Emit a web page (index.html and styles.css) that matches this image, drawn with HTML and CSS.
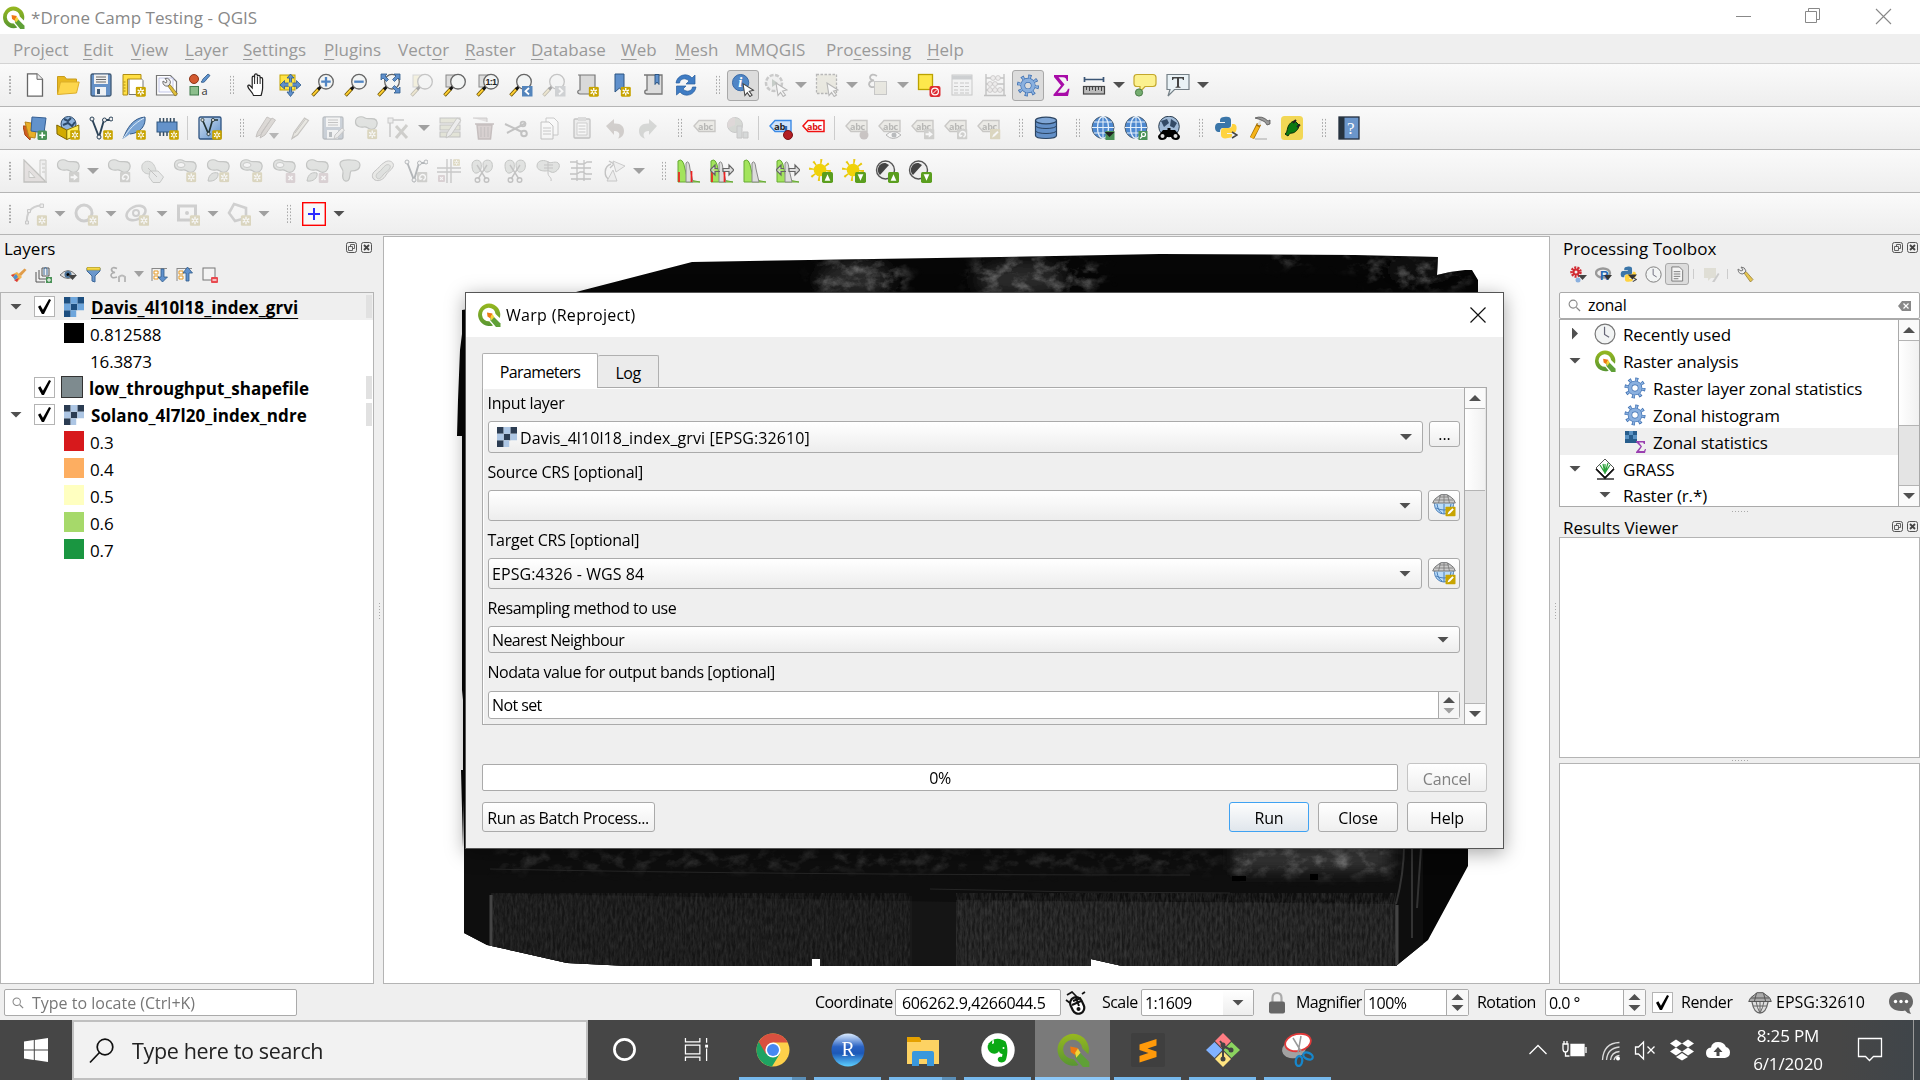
FILE: index.html
```
<!DOCTYPE html>
<html lang="en">
<head>
<meta charset="utf-8">
<title>*Drone Camp Testing - QGIS</title>
<link rel="stylesheet" href="styles.css">
</head>
<body>
<svg class="defs" aria-hidden="true">
<defs>
<linearGradient id="gq" x2="0" y2="1"><stop offset="0" stop-color="#97b81f"/><stop offset="1" stop-color="#589632"/></linearGradient>
<linearGradient id="gblue" x2="1" y2="1"><stop offset="0" stop-color="#d5e4f4"/><stop offset="1" stop-color="#5d8fc9"/></linearGradient>
<linearGradient id="gr" x2="0" y2="1"><stop offset="0" stop-color="#dcecff"/><stop offset=".4" stop-color="#2a63c4"/><stop offset=".6" stop-color="#1c58b8"/><stop offset="1" stop-color="#5ed0ff"/></linearGradient>
<symbol id="bNew" viewBox="0 0 10 10"><rect x=".2" y=".2" width="9.6" height="9.6" rx="1.4" fill="#c8a400"/><path d="M5 1.5v7M2 3.2l6 3.6M8 3.2L2 6.800" stroke="#fff" stroke-width="1.3"/><circle cx="5" cy="5" r="1" fill="#c8a400"/></symbol>
<symbol id="bX" viewBox="0 0 10 10"><rect width="10" height="10" rx="1.4" fill="#c98a9c"/><path d="M3 3l4 4M7 3L3 7" stroke="#fff" stroke-width="1.600"/></symbol>
<symbol id="bArrow" viewBox="0 0 10 10"><rect width="10" height="10" rx="1" fill="#8f8f80"/><path d="M1.500 4h3V2L8.500 5 4.500 8V6h-3z" fill="#fff"/></symbol>
<symbol id="bRot" viewBox="0 0 10 10"><rect width="10" height="10" rx="1" fill="#8f8f80"/><path d="M3 6.500A2.700 2.700 0 1 1 6 7.700M2 5l1 2 2-1" fill="none" stroke="#fff" stroke-width="1.400"/></symbol>
<symbol id="bPen" viewBox="0 0 10 10"><rect width="10" height="10" rx="1" fill="#c8a400"/><path d="M2 8l1-2.500L7 1.800 8.300 3 4.500 7z" fill="#fff"/></symbol>
<symbol id="bUp" viewBox="0 0 10 10"><rect width="10" height="10" rx="1.500" fill="#5a9e1e"/><path d="M5 2l2.600 6H2.400z" fill="#fff"/></symbol>
<symbol id="bDown" viewBox="0 0 10 10"><rect width="10" height="10" rx="1.500" fill="#5a9e1e"/><path d="M5 8l2.600-6H2.400z" fill="#fff"/></symbol>
<symbol id="qgis" viewBox="0 0 24 24"><path d="M12 0.500a11.300 11.300 0 1 0 4 22l-3.700-4.200A6.800 6.800 0 1 1 18.600 11l4.200 4A11.300 11.300 0 0 0 12 .5z" fill="url(#gq)"/><path d="M13.500 14h3.500l6.500 6.500V24h-4.500L13.500 17.500z" fill="#5fa037"/><path d="M10 9.500l5.500 1-2 5-3-2z" fill="#ee7913"/><path d="M13.500 14l2-3 1.800 3-3 3.500z" fill="#f3d53a"/></symbol>
<symbol id="new" viewBox="0 0 24 24"><path d="M4.500.8h9.500l5.500 5.500v16.900h-15z" fill="#fff" stroke="#666" stroke-width="1.300"/><path d="M14 .8v5.500h5.500" fill="#eee" stroke="#666"/></symbol>
<symbol id="open" viewBox="0 0 24 24"><path d="M1.500 21V3.500h7l2 2.500h10v4" fill="#e8b820" stroke="#c89c1c"/><path d="M1.500 21.500l3-12.500h18.700L20.500 20z" fill="#fdd64c" stroke="#dcae2a"/></symbol>
<symbol id="save" viewBox="0 0 24 24"><rect x="2" y="1" width="20" height="22" rx="1.500" fill="#6591c7" stroke="#415a75" stroke-width="1.300"/><rect x="5" y="1.500" width="14" height="9.500" fill="#f0f0f0"/><path d="M7 4h10M7 6.500h10M7 9h10" stroke="#666"/><rect x="6" y="14" width="11" height="8.500" fill="#eef1f4"/><rect x="8" y="16" width="3" height="5" fill="#415a75"/></symbol>
<symbol id="layout" viewBox="0 0 24 24"><path d="M7 2.500h9l5 5v14H7z" fill="#fff" stroke="#777"/><path d="M1 1.500h18V6H5.500v16H1z" fill="#ffdf45" stroke="#b08e14"/><path d="M1.500 9h2M1.500 12h2M1.500 15h2M1.500 18h2" stroke="#b08e14"/><use href="#bNew" x="13.500" y="13.500" width="10.500" height="10.500"/></symbol>
<symbol id="wrenchpage" viewBox="0 0 24 24"><path d="M1.500 2.500h14l6 6V22h-20z" fill="#fff" stroke="#777" stroke-width="1.200"/><rect x="4" y="5" width="14" height="14" fill="#fafbff" stroke="#aab0dd" stroke-width=".7"/><path d="M12.500 12.500l2.500-1 7.500 9.500-2.500 2z" fill="#e0bf3a" stroke="#80681b" stroke-width=".7"/><path d="M8 8a4 4 0 0 0 5 5l2-2a4 4 0 0 0-5-5.500l2 2.500-1 2z" fill="#ececec" stroke="#666" stroke-width=".9"/></symbol>
<symbol id="style" viewBox="0 0 24 24"><circle cx="6" cy="6" r="4.500" fill="#d45a30" stroke="#8c3518"/><rect x="2" y="13.500" width="8.500" height="8.500" fill="#8cbe8c" stroke="#3f7a4b"/><path d="M13 9c2-1 1-3 3-4l4-4 2 1.500L18 7c-1 2-3 3-5 2z" fill="#5e93cf" stroke="#2f5680" stroke-width=".8"/><text x="13.500" y="21.500" font-family="Open Sans, sans-serif" font-size="11" fill="#333">a</text></symbol>
<symbol id="hand" viewBox="0 0 24 24"><path d="M8.500 22.500c-.5-3-5-6-5.700-9-.3-1.500 1.700-2 2.700-.3L7.200 15V4.500c0-1.800 2.300-1.800 2.400 0V2.200c0-1.900 2.700-1.900 2.800 0v1.300c.1-1.700 2.600-1.600 2.700.2v2c.2-1.500 2.400-1.300 2.500.4v9c0 3-1 5-1.500 7.400z" fill="#fff" stroke="#222" stroke-width="1.200"/><path d="M9.600 4v7M12.400 4v7M15.100 6v5" stroke="#222"/></symbol>
<symbol id="pan" viewBox="0 0 24 24"><rect x="2" y="2" width="15" height="15" fill="#ffe344" stroke="#c2a100"/><path d="M12.500 1l3.500 4h-2.500v5h5V7.500L23 12l-4.500 4v-2.700h-5V19H16l-3.500 4.500L9 19h2.500v-5.700h-5V16L2 12l4.500-4.500V10h5V5H9z" fill="#5f90cc" stroke="#305a88" stroke-width=".8"/><rect x="10.500" y="9.500" width="4" height="4" fill="#ffe344"/></symbol>
<symbol id="mag" viewBox="0 0 24 24"><path d="M8 15.500L1.500 22.500" stroke="#6a5200" stroke-width="3.400"/><path d="M7.500 16L1.800 22.200" stroke="#ffcf32" stroke-width="1.900"/><path d="M10 13.500l-3 3" stroke="#111" stroke-width="3"/><circle cx="15" cy="8.700" r="7.300" fill="#f2f4f4" stroke="#666" stroke-width="1.300"/></symbol>
<symbol id="zin" viewBox="0 0 24 24"><use href="#mag"/><path d="M15 4v9.500M10.200 8.700h9.500" stroke="#5085c4" stroke-width="2.300"/></symbol>
<symbol id="zout" viewBox="0 0 24 24"><use href="#mag"/><path d="M10.200 8.700h9.500" stroke="#5085c4" stroke-width="2.300"/></symbol>
<symbol id="zfull" viewBox="0 0 24 24"><use href="#mag"/><path d="M4 1h6L8 3l3.500 3.500-2 2L6 5 4 7zM23 1h-6l2 2-3.500 3.500 2 2L21 5l2 2zM23 20h-6l2-2-3.500-3.500 2-2L21 16l2-2z" fill="#5f90cc" stroke="#2f5a8a" stroke-width=".8"/></symbol>
<symbol id="zsel" viewBox="0 0 24 24"><rect x="3" y="2" width="12" height="12" fill="#ffe969" stroke="#999"/><use href="#mag"/></symbol>
<symbol id="zlay" viewBox="0 0 24 24"><rect x="3" y="2" width="12" height="12" fill="#ddd" stroke="#888"/><use href="#mag"/></symbol>
<symbol id="znat" viewBox="0 0 24 24"><rect x="3" y="2" width="12" height="12" fill="#ddd" stroke="#888"/><use href="#mag"/><text x="9.400" y="12" font-family="Liberation Sans, sans-serif" font-weight="bold" font-size="9" textLength="11.500" fill="#222">1:1</text></symbol>
<symbol id="zlast" viewBox="0 0 24 24"><use href="#mag"/><rect x="13" y="13" width="10.500" height="10.500" fill="#5485bc"/><path d="M20 15l-3.500 3.200L20 21.500" fill="none" stroke="#fff" stroke-width="1.800"/></symbol>
<symbol id="znext" viewBox="0 0 24 24"><use href="#mag"/><rect x="13" y="13" width="10.500" height="10.500" fill="#8895a5"/><path d="M17 15l3.500 3.200L17 21.500" fill="none" stroke="#fff" stroke-width="1.800"/></symbol>
<symbol id="mapview" viewBox="0 0 24 24"><path d="M3 2h17v19H5c-3 0-3-4 0-4V2" fill="#d9d9d9" stroke="#777" stroke-width="1.200"/><use href="#bNew" x="13.500" y="13.500" width="10.500" height="10.500"/></symbol>
<symbol id="bm" viewBox="0 0 24 24"><path d="M7 1h9v19l-4.500-5L7 19z" fill="#5f90cc" stroke="#2d5582"/><use href="#bNew" x="12.500" y="13.500" width="10.500" height="10.500"/></symbol>
<symbol id="bms" viewBox="0 0 24 24"><path d="M3 2h18v19H6c-3 0-3-4 0-4V2" fill="#dcdcdc" stroke="#777" stroke-width="1.300"/><path d="M14 1.500h4v10l-2-2.500-2 2.500z" fill="#5f90cc" stroke="#2d5582"/></symbol>
<symbol id="refresh" viewBox="0 0 24 24"><path d="M2 10c1-8 11-11 16-5l3-3v9h-9l3-3c-4-4-9-2-9.500 2zM22 14c-1 8-11 11-16 5l-3.500 3v-9H12l-3 3c4 4 9 2 9.500-2z" fill="#3f7cc4" stroke="#2a5e9e" stroke-width=".7"/></symbol>
<symbol id="cursor" viewBox="0 0 24 24"><path d="M12 10l11 7-4.500 1 3 4-2.300 1.500-2.700-4-2.500 3z" fill="#fff" stroke="#444" stroke-width="1.100"/></symbol>
<symbol id="ident" viewBox="0 0 24 24"><circle cx="9.500" cy="9" r="8.500" fill="#4f86c6" stroke="#3567a5"/><text x="7" y="14" font-family="Liberation Serif, serif" font-style="italic" font-weight="bold" font-size="15" fill="#fff">i</text><use href="#cursor"/></symbol>
<symbol id="gear" viewBox="0 0 24 24"><circle cx="12" cy="12" r="9.200" fill="none" stroke="#3c6eb0" stroke-width="4.600" stroke-dasharray="3.200 4.020"/><circle cx="12" cy="12" r="5.500" fill="none" stroke="#3c6eb0" stroke-width="5"/><circle cx="12" cy="12" r="9" fill="none" stroke="#8ab0df" stroke-width="3.400" stroke-dasharray="1.800 5.270" stroke-dashoffset="-.6"/><circle cx="12" cy="12" r="5.500" fill="none" stroke="#8ab0df" stroke-width="3.600"/></symbol>
<symbol id="action" viewBox="0 0 24 24"><circle cx="10" cy="10" r="8" fill="#e6e6e6" stroke="#777" stroke-width="2.500" stroke-dasharray="4 1.500"/><path d="M8 6l6 4-6 4z" fill="#5a8a66"/><use href="#cursor"/></symbol>
<symbol id="select" viewBox="0 0 24 24"><rect x="1.500" y="1.500" width="20" height="19" fill="#d9d49a" stroke="#444" stroke-dasharray="2.500 1.500" stroke-width="1.300"/><use href="#cursor"/></symbol>
<symbol id="expr" viewBox="0 0 24 24"><path d="M11 3q-6-3-7 1 0 3 4 3.500-5 .5-5 4 1 4.500 8 1.500" fill="none" stroke="#555" stroke-width="1.800"/><rect x="8.500" y="8.500" width="12" height="13" fill="#d6d1a0" stroke="#777"/></symbol>
<symbol id="desel" viewBox="0 0 24 24"><rect x="1.500" y="1.500" width="14" height="15" fill="#fde74c" stroke="#bba200" stroke-width="1.300"/><rect x="12.500" y="13" width="11" height="11" rx="2" fill="#dd2c33"/><circle cx="18" cy="18.500" r="3.400" fill="none" stroke="#fff" stroke-width="1.200"/><path d="M16 20.500l4-4" stroke="#fff"/></symbol>
<symbol id="table" viewBox="0 0 24 24"><rect x="2" y="2" width="20" height="20" fill="#eef1f3" stroke="#777"/><path d="M2 4.500h20" stroke="#789" stroke-width="4"/><path d="M4 10h4M10 10h10M4 13.500h4M10 13.500h10M4 17h4M10 17h10M4 20h4M10 20h10" stroke="#777" stroke-dasharray="4 1"/></symbol>
<symbol id="abacus" viewBox="0 0 24 24"><path d="M3 1v22M21 1v22M1 22.500h22M3 5h18M3 11h18M3 17h18" stroke="#666" stroke-width="1.400"/><g fill="#e5d9d9" stroke="#766" stroke-width=".8"><circle cx="10" cy="5" r="2.400"/><circle cx="15" cy="5" r="2.400"/><circle cx="7" cy="11" r="2.400"/><circle cx="12" cy="11" r="2.400"/><circle cx="7" cy="17" r="2.400"/><circle cx="12" cy="17" r="2.400"/><circle cx="17" cy="17" r="2.400"/></g></symbol>
<symbol id="sigma" viewBox="0 0 24 24"><path d="M5 2h14v6h-1.200c-.4-2.500-1.300-3.800-4-3.800H9.500l6 7.300-6.700 8.200h5.700c2.800 0 3.700-1.700 4.500-4H20.500L19 23H4.500v-1.500l7.500-9L5 4z" fill="#a80ca8"/></symbol>
<symbol id="ruler" viewBox="0 0 24 24"><path d="M2 6.500h20M2.500 4v5M21.500 4v5" stroke="#3a5575" stroke-width="1.700"/><rect x="1.500" y="13.500" width="21" height="7.500" fill="#bbb" stroke="#444" stroke-width="1.200"/><path d="M4.500 14v3M7.500 14v4M10.500 14v3M13.500 14v4M16.500 14v3M19.500 14v4" stroke="#444"/></symbol>
<symbol id="tip" viewBox="0 0 24 24"><path d="M4 1.500h16q3 0 3 3v6q0 3-3 3h-8l-5 5.500v-5.500H4q-3 0-3-3v-6q0-3 3-3z" fill="#fcf18e" stroke="#c3a72c" stroke-width="1.200"/><circle cx="6" cy="19.500" r="3.600" fill="#75ad70" stroke="#487b46"/></symbol>
<symbol id="tnote" viewBox="0 0 24 24"><path d="M1 1.500h22v15H8.500L2 23l2-6.500H1z" fill="#e9f2f6" stroke="#758087" stroke-width="1.200"/><path d="M6 4h12v3h-1l-.8-1.500H13v8l1.500.5v.8h-5V14l1.500-.5v-8H7.800L7 7H6z" fill="#444"/></symbol>
<symbol id="dsm" viewBox="0 0 24 24"><path d="M0 10l9 0-2 14-5-5z" fill="#d15e1f" stroke="#a54512"/><path d="M2 6l12 2-2 14-6-1z" fill="#e9af28" stroke="#b7861a"/><path d="M9 1l14 1-2 15-13-2z" fill="#6292cb" stroke="#345e93"/><rect x="14.500" y="14.500" width="9.500" height="9.500" rx="1.500" fill="#4b9258"/><path d="M19.200 16.300v6M16.300 19.200h6" stroke="#fff" stroke-width="1.600"/></symbol>
<symbol id="gpkg" viewBox="0 0 24 24"><circle cx="12.500" cy="8" r="7.500" fill="#8eb3dc" stroke="#2c4a6b"/><path d="M8 3l4 2 3-3M7 9l5-2 4 3 3-4" stroke="#2c4a6b" stroke-width="2" fill="none"/><path d="M.8 9l10 5v9.500L1 18z" fill="#d2ab00" stroke="#7a6200"/><path d="M10.800 14l12-5v9.500l-12 5z" fill="#ffee55" stroke="#8a7300"/><use href="#bNew" x="14" y="14" width="10" height="10"/></symbol>
<symbol id="vec" viewBox="0 0 24 24"><path d="M3 3l7 18 5-17h7" fill="none" stroke="#2c4358" stroke-width="1.900"/><g fill="#eee" stroke="#2c4358"><circle cx="3" cy="3" r="2"/><circle cx="10" cy="21" r="2"/><circle cx="15.500" cy="4" r="2"/><circle cx="22" cy="3" r="2"/></g></symbol>
<symbol id="vecnew" viewBox="0 0 24 24"><use href="#vec"/><use href="#bNew" x="14" y="14" width="10" height="10"/></symbol>
<symbol id="feather" viewBox="0 0 24 24"><path d="M1 23C5 12 11 2 23 1c1 8-4 16-15 17" fill="#79a4d5" stroke="#345a88"/><path d="M1 23C7 13 13 7 22 2" stroke="#dcebf8" fill="none"/><use href="#bNew" x="14" y="14" width="10" height="10"/></symbol>
<symbol id="chip" viewBox="0 0 24 24"><path d="M5 2v18M8.500 2v18M12 2v18M15.500 2v18M19 2v18" stroke="#33495e" stroke-width="1.500"/><rect x="2" y="6" width="20" height="10" fill="#6492ca" stroke="#2f5680"/><use href="#bNew" x="14" y="14" width="10" height="10"/></symbol>
<symbol id="virt" viewBox="0 0 24 24"><rect x="1" y="1" width="22" height="22" rx="1.500" fill="url(#gblue)" stroke="#2e5380" stroke-width="1.300"/><path d="M4.500 4l6 14 4-14H20" fill="none" stroke="#233" stroke-width="1.700"/><g fill="#ddd" stroke="#233" stroke-width=".8"><circle cx="4.500" cy="4" r="1.600"/><circle cx="10.500" cy="18" r="1.600"/><circle cx="15" cy="4" r="1.600"/></g><use href="#bNew" x="14" y="14" width="10" height="10"/></symbol>
<symbol id="pen" viewBox="0 0 24 24"><path d="M4 22.500l2-6L16.500 2l4 2.500L9.500 19z" fill="#d8d0a8" stroke="#776a55" stroke-width="1.200"/><path d="M4 22.500l3-2M7 17L17.500 3" stroke="#776a55"/></symbol>
<symbol id="pens" viewBox="0 0 24 24"><path d="M1 21l1.500-5L12 1l4 2L5.500 19zM5 22l2-6L17 2l3.500 2L10 19z" fill="#b9a08c" stroke="#75604f"/><path d="M14 17h10l-5 6z" fill="#444"/></symbol>
<symbol id="savee" viewBox="0 0 24 24"><use href="#save"/><path d="M13 23l1-4 7-7 2.500 2-7 7.500z" fill="#ddd" stroke="#777"/></symbol>
<symbol id="blob" viewBox="0 0 24 24"><path d="M1.500 6C1.500 0 8 0 11 2s11-2 12 4-4 8-7 7-3-2.500-6-2-8.500 0-8.500-5z" fill="#b4c0b3" stroke="#5f6a60" stroke-width="1.200"/></symbol>
<symbol id="blobn" viewBox="0 0 24 24"><use href="#blob"/><use href="#bNew" x="13" y="13" width="10.500" height="10.500"/></symbol>
<symbol id="bloba" viewBox="0 0 24 24"><use href="#blob"/><use href="#bArrow" x="13" y="13" width="10.500" height="10.500"/></symbol>
<symbol id="blobr" viewBox="0 0 24 24"><use href="#blob"/><use href="#bRot" x="13" y="13" width="10.500" height="10.500"/></symbol>
<symbol id="ring" viewBox="0 0 24 24"><use href="#blob"/><ellipse cx="8" cy="6" rx="4" ry="2.500" fill="#f3f3f3" stroke="#6f7a70"/><use href="#bNew" x="13" y="13" width="10.500" height="10.500"/></symbol>
<symbol id="ringx" viewBox="0 0 24 24"><use href="#blob"/><ellipse cx="8" cy="6" rx="4" ry="2.500" fill="#f3f3f3" stroke="#6f7a70"/><use href="#bX" x="13.500" y="14" width="10" height="10"/></symbol>
<symbol id="part" viewBox="0 0 24 24"><use href="#blob"/><path d="M2 22c1-8 6-9 10-8 1 5-4 9-10 8z" fill="#b4c0b3" stroke="#5f6a60"/><use href="#bNew" x="13" y="13" width="10.500" height="10.500"/></symbol>
<symbol id="partx" viewBox="0 0 24 24"><use href="#blob"/><path d="M2 22c1-8 6-9 10-8 1 5-4 9-10 8z" fill="#b4c0b3" stroke="#5f6a60"/><use href="#bX" x="13.500" y="14" width="10" height="10"/></symbol>
<symbol id="reshape" viewBox="0 0 24 24"><path d="M2 5c0-5 8-4 11-4s9 0 9 5-5 6-9 6c-2 3 0 9-4 10s-5-4-4-8-3-5-3-9z" fill="#b4c0b3" stroke="#5f6a60" stroke-width="1.200"/></symbol>
<symbol id="offset" viewBox="0 0 24 24"><path d="M14 3c5-3 10 1 8 5s-5 4-7 8-7 7-11 5-3-7 0-9 5-6 10-9z" fill="#d6d6c6" stroke="#666"/><path d="M15 6c3-1 5 0 4 3s-5 4-7 7-4 5-6 3 0-5 2-6 4-5 7-7z" fill="#b4c0b3" stroke="#6f7a70"/></symbol>
<symbol id="simp" viewBox="0 0 24 24"><path d="M2 6c3-6 10-4 12 0s3 6 0 8S0 16 2 6z" fill="#b4c0b3" stroke="#6f7a70"/><path d="M10 12h8l5.500 6-3.500 5.500h-7L9 18z" fill="#d0d8d6" stroke="#6f7a70"/><path d="M8 9l9 9" stroke="#666"/></symbol>
<symbol id="vrot" viewBox="0 0 24 24"><use href="#vec"/><use href="#bRot" x="13" y="13" width="10.500" height="10.500"/></symbol>
<symbol id="merge" viewBox="0 0 24 24"><path d="M10 0v24M14 0v24M0 9h24M0 13h24" stroke="#777" stroke-width="1.400"/><use href="#bNew" x="16" y="0" width="7" height="7"/><use href="#bX" x="1" y="16" width="7" height="7"/></symbol>
<symbol id="split" viewBox="0 0 24 24"><path d="M2 6c0-6 8-6 9-2s0 9-4 10-5-4-5-8zM13 5c0-5 8-5 9-1s0 8-4 9-5-4-5-8z" fill="#b4c0b3" stroke="#5f6a60"/><path d="M7 6l9 14M17 6L8 20" stroke="#666" stroke-width="1.400"/><circle cx="7.500" cy="21" r="2.300" fill="none" stroke="#666" stroke-width="1.400"/><circle cx="16.500" cy="21" r="2.300" fill="none" stroke="#666" stroke-width="1.400"/></symbol>
<symbol id="mergef" viewBox="0 0 24 24"><path d="M1 7c0-7 9-6 11-4s9-2 11 2-4 10-8 8-3-1-6-1-8-1-8-5z" fill="#b4c0b3" stroke="#5f6a60"/><path d="M8 6h9M8 9h9M12 2v12c0 4 4 4 3 8" stroke="#666" fill="none"/></symbol>
<symbol id="ladder" viewBox="0 0 24 24"><path d="M1 3h6l3 2h5l3-2h5M2 9h20M1 15h7l3-2h3l3 2h6M2 20h20M8 1v21M15 1v21" stroke="#666" fill="none" stroke-width="1.300"/></symbol>
<symbol id="rotsym" viewBox="0 0 24 24"><path d="M8 21C1 18 2 7 9 5M7 2l5 3-4 4" stroke="#666" fill="none" stroke-width="1.400"/><path d="M11 2l12 5-9 6zM5 22l6-11 4 11z" fill="#e3e3e3" stroke="#777"/></symbol>
<symbol id="tri" viewBox="0 0 24 24"><path d="M1 1v22h22z" fill="#d3b9b3" stroke="#665" stroke-width="1.300"/><path d="M6 12v6.500h6z" fill="#f3f3f3" stroke="#776"/><path d="M17 1h6v22" fill="#ddd" stroke="#776"/><path d="M17 1v16M19 5h3M19 9h3M19 13h3" stroke="#776"/></symbol>
<symbol id="vtool" viewBox="0 0 24 24"><path d="M3 21V4h14" stroke="#777" fill="none" stroke-width="1.500"/><rect x="1" y="2" width="5" height="5" fill="#ddd" stroke="#777"/><path d="M9 22L20 9M9 10l11 12" stroke="#8d8976" stroke-width="3"/></symbol>
<symbol id="multi" viewBox="0 0 24 24"><rect x="2" y="2" width="20" height="5" fill="#c5cc78" stroke="#666"/><rect x="2" y="9" width="20" height="5" fill="#c5cc78" stroke="#666"/><rect x="2" y="16" width="20" height="5" fill="#c5cc78" stroke="#666"/><path d="M8 22l1-5L19 2l4 2L13 19z" fill="#ddd" stroke="#776"/></symbol>
<symbol id="trash" viewBox="0 0 24 24"><path d="M2 2h14v4" fill="#c7b5b5" stroke="#877"/><path d="M4 8h19M6 9l1.500 14h12L21 9z" fill="#c08a8a" stroke="#855" stroke-width="1.500"/><path d="M10 11v10M13.500 11v10M17 11v10" stroke="#866" stroke-width="1.300"/></symbol>
<symbol id="cut" viewBox="0 0 24 24"><path d="M1 8l17 8M3 17L22 7" stroke="#666" stroke-width="2"/><circle cx="20" cy="17.500" r="2.800" fill="none" stroke="#666" stroke-width="2"/><circle cx="19" cy="8" r="2.400" fill="none" stroke="#666" stroke-width="1.800"/></symbol>
<symbol id="copy" viewBox="0 0 24 24"><path d="M9 2h8l4 4v13H9z" fill="#fff" stroke="#777"/><path d="M4 6h8l4 4v13H4z" fill="#fff" stroke="#666"/><path d="M6 12h8M6 15h8M6 18h8" stroke="#777"/></symbol>
<symbol id="paste" viewBox="0 0 24 24"><rect x="4" y="3" width="16" height="19" rx="1" fill="#ddd" stroke="#666" stroke-width="1.300"/><rect x="8" y="1" width="8" height="4" fill="#aaa"/><path d="M7 7h10v12H7z" fill="#fff" stroke="#888"/><path d="M8.500 10h7M8.500 13h7M8.500 16h7" stroke="#777"/></symbol>
<symbol id="undo" viewBox="0 0 24 24"><path d="M3 10l8-7v4.500c7-.5 10 3 10 7.500s-3 7-6 7.500c3-4 1-8-4-7.500v4z" fill="#9d8475"/></symbol>
<symbol id="redo" viewBox="0 0 24 24"><path d="M21 10l-8-7v4.500C6 7 3 10.500 3 15s3 7 6 7.500c-3-4-1-8 4-7.500v4z" fill="#98a294"/></symbol>
<symbol id="lab" viewBox="0 0 24 24"><path d="M1 10l5-5.500h16v11H6z" fill="#dcd8bc" stroke="#7c7464" stroke-width="1.400"/><text x="5" y="13.500" font-family="Open Sans, sans-serif" font-weight="bold" font-size="9" textLength="15" fill="#443">abc</text></symbol>
<symbol id="labred" viewBox="0 0 24 24"><path d="M1 10l5-5.500h16v11H6z" fill="#fff" stroke="#f01010" stroke-width="1.500"/><text x="5" y="13.500" font-family="Open Sans, sans-serif" font-weight="bold" font-size="9" textLength="15" fill="#e01010">abc</text></symbol>
<symbol id="labpin" viewBox="0 0 24 24"><path d="M1 10l5-5.500h16v11H6z" fill="#cfe3fa" stroke="#3b8ae6" stroke-width="1.400"/><text x="5" y="13.500" font-family="Open Sans, sans-serif" font-weight="bold" font-size="9.500" fill="#222">ab</text><path d="M17 10v6" stroke="#2b6cb8" stroke-width="2.400"/><circle cx="19" cy="19" r="4.500" fill="#b21f24" stroke="#7b1114"/></symbol>
<symbol id="labp" viewBox="0 0 24 24"><use href="#lab"/><circle cx="19" cy="19" r="4.500" fill="#8a6a65"/></symbol>
<symbol id="labe" viewBox="0 0 24 24"><use href="#lab"/><path d="M8 19q7-7 15 0-8 7-15 0z" fill="#fff" stroke="#444"/><circle cx="16" cy="19" r="2.500" fill="#456"/></symbol>
<symbol id="laba" viewBox="0 0 24 24"><use href="#lab"/><use href="#bArrow" x="13" y="13" width="10.500" height="10.500"/></symbol>
<symbol id="labr" viewBox="0 0 24 24"><use href="#lab"/><use href="#bRot" x="13" y="13" width="10.500" height="10.500"/></symbol>
<symbol id="labc" viewBox="0 0 24 24"><use href="#lab"/><use href="#bPen" x="13" y="13" width="10.500" height="10.500"/></symbol>
<symbol id="diag" viewBox="0 0 24 24"><circle cx="9" cy="9" r="7.500" fill="#94a88a" stroke="#777"/><path d="M9 9V1.500A7.500 7.500 0 0 0 2 12z" fill="#c79c9c"/><path d="M11 10h5v12h-5zM17 16h5v6h-5z" fill="#9aa" stroke="#777"/></symbol>
<symbol id="db" viewBox="0 0 24 24"><path d="M1.500 4.500v15c0 4 21 4 21 0v-15" fill="#6390c8" stroke="#2b4462" stroke-width="1.200"/><path d="M1.500 9.500c0 4 21 4 21 0M1.500 14.500c0 4 21 4 21 0" fill="none" stroke="#2b4462"/><ellipse cx="12" cy="4.500" rx="10.500" ry="3.300" fill="#7fa6d6" stroke="#2b4462" stroke-width="1.200"/></symbol>
<symbol id="globe" viewBox="0 0 24 24"><circle cx="12" cy="11.500" r="11" fill="#4e89d0" stroke="#4d5f70"/><path d="M12 .5v22M3 6h18M3 17h18M1 11.500h22" stroke="#e6f0fa" stroke-width="1"/><ellipse cx="12" cy="11.500" rx="5.500" ry="11" fill="none" stroke="#e6f0fa" stroke-width="1.300"/></symbol>
<symbol id="g1" viewBox="0 0 24 24"><use href="#globe"/><rect x="14.500" y="15" width="9" height="9" fill="#4b9258"/><path d="M13.500 16h10l-5 5z" fill="#222"/></symbol>
<symbol id="g2" viewBox="0 0 24 24"><use href="#globe"/><rect x="14.500" y="15" width="9" height="9" fill="#4b9258"/><circle cx="19.500" cy="18.500" r="2" fill="none" stroke="#fff" stroke-width="1.200"/><path d="M18 20.500l-2 2" stroke="#fff" stroke-width="1.300"/></symbol>
<symbol id="g3" viewBox="0 0 24 24"><circle cx="12" cy="10.500" r="10.300" fill="#9fb9d6" stroke="#2c3e50"/><path d="M4 5l6-2 2 4-5 4zM14 3l6 4-3 5-4-2z" fill="#334a66"/><path d="M6 14h4.500v-2h3v2H18l5 6q0 4-4 4t-5-3h-4q-1 3-5 3t-4-4z"/><circle cx="5.500" cy="20" r="2" fill="#ddd"/><circle cx="18.500" cy="20" r="2" fill="#ddd"/></symbol>
<symbol id="py" viewBox="0 0 24 24"><path d="M10 1c4-1 7 0 7 3v5c0 2-1 3-3 3H9c-2 0-3 1-3 4H4c-4 0-4-9 0-9h7V6H6V4c0-2 2-3 4-3z" fill="#3b76a9"/><path d="M14 22c-4 1-7 0-7-3v-4c0-2 1-3 3-3h5c2 0 3-1 3-4h2c4 0 3 9 0 9h-7v1h5v2c0 1-2 2-4 2z" fill="#ffd33f"/><path d="M18 16l5 3-5 3" fill="none" stroke="#444" stroke-width="1.500"/></symbol>
<symbol id="hammer" viewBox="0 0 24 24"><path d="M8 23h12" stroke="#ccc" stroke-width="2"/><path d="M12 8L5 22" stroke="#a36e00" stroke-width="4.600"/><path d="M11 10.500L4.800 22" stroke="#f6b41a" stroke-width="3.200"/><path d="M14.500 3L11.500 9" stroke="#ddd" stroke-width="2.500"/><path d="M8 2q7-3 13 3l2-1 0 4-3 1-2-3q-5-3-10-4z" fill="#999" stroke="#444" stroke-width=".7"/></symbol>
<symbol id="plug" viewBox="0 0 24 24"><rect x="1" width="22" height="24" rx="3.500" fill="#f2d755"/><path d="M5 18c2-1 2-4 3-7s4-6 7-6l4 4c0 4-4 8-7 8-2 0-3 1-4 3z" fill="#0c7a12" stroke="#052c06"/><path d="M13 7l3-3M17 11l3-2.500" stroke="#222" stroke-width="2"/></symbol>
<symbol id="help" viewBox="0 0 24 24"><rect x="2" y="1" width="20" height="22" fill="#6b96cb" stroke="#222d3c" stroke-width="1.300"/><rect x="2" y="1" width="5.500" height="22" fill="#26333f"/><text x="10" y="17.500" font-family="Liberation Serif, serif" font-size="17" fill="#fff">?</text></symbol>
<symbol id="hist" viewBox="0 0 24 24"><path d="M1 23V2q5-4 7 8 1 12 15 13z" fill="#a3e45c" stroke="#66aa32"/><path d="M9 23V4q3-4 4 6l3 13z" fill="#ddd" stroke="#888"/></symbol>
<symbol id="h1" viewBox="0 0 24 24"><use href="#hist"/><path d="M2 23V13M14.500 23V12" stroke="#e22" stroke-width="1.700"/></symbol>
<symbol id="harr" viewBox="0 0 24 24"><path d="M0 11l5-5v3.500h3M24 11l-5-5v3.500h-6v3h6V16zM0 11l5 5v-3.500h5" fill="#ddd" stroke="#666" stroke-width="1.200"/></symbol>
<symbol id="h2" viewBox="0 0 24 24"><use href="#h1"/><use href="#harr"/></symbol>
<symbol id="h4" viewBox="0 0 24 24"><use href="#hist"/><use href="#harr"/></symbol>
<symbol id="sun" viewBox="0 0 24 24"><circle cx="11" cy="11" r="8.500" fill="none" stroke="#e8c80a" stroke-width="5" stroke-dasharray="1.700 4.980"/><circle cx="11" cy="11" r="6.300" fill="#f0d20a"/></symbol>
<symbol id="s1" viewBox="0 0 24 24"><use href="#sun"/><use href="#bUp" x="13" y="13" width="11" height="11"/></symbol>
<symbol id="s2" viewBox="0 0 24 24"><use href="#sun"/><use href="#bDown" x="13" y="13" width="11" height="11"/></symbol>
<symbol id="con" viewBox="0 0 24 24"><circle cx="10.500" cy="11" r="9" fill="#eee" stroke="#555" stroke-width="1.400"/><path d="M10.500 4A7 7 0 0 0 5 16l9-10z" fill="#444"/></symbol>
<symbol id="c1" viewBox="0 0 24 24"><use href="#con"/><use href="#bUp" x="13" y="13" width="11" height="11"/></symbol>
<symbol id="c2" viewBox="0 0 24 24"><use href="#con"/><use href="#bDown" x="13" y="13" width="11" height="11"/></symbol>
<symbol id="arc" viewBox="0 0 24 24"><path d="M4 21C3 12 7 4 18 3.500" fill="none" stroke="#888" stroke-width="2"/><path d="M2.500 19h3v3h-3zM4.500 7.500h3v3h-3zM17 2h3.500v3.500H17z" fill="#ddd" stroke="#777"/><use href="#bNew" x="13.500" y="13" width="11" height="11"/></symbol>
<symbol id="circ" viewBox="0 0 24 24"><circle cx="10" cy="11" r="8" fill="none" stroke="#888" stroke-width="3"/><use href="#bNew" x="13.500" y="13" width="11" height="11"/></symbol>
<symbol id="elli" viewBox="0 0 24 24"><ellipse cx="11" cy="11" rx="10" ry="6.500" transform="rotate(-25 11 11)" fill="none" stroke="#888" stroke-width="2.600"/><circle cx="11" cy="11" r="3" fill="none" stroke="#888" stroke-width="2"/><use href="#bNew" x="13.500" y="13" width="11" height="11"/></symbol>
<symbol id="rect" viewBox="0 0 24 24"><rect x="2.500" y="4" width="17" height="14" fill="none" stroke="#888" stroke-width="3"/><circle cx="11" cy="11" r="2" fill="#888"/><use href="#bNew" x="13.500" y="13" width="11" height="11"/></symbol>
<symbol id="poly" viewBox="0 0 24 24"><path d="M7 2l12 4v10l-11 3-6-8z" fill="none" stroke="#888" stroke-width="2.600"/><use href="#bNew" x="13.500" y="13" width="11" height="11"/></symbol>
<symbol id="plus" viewBox="0 0 24 24"><rect x=".7" y=".7" width="22.600" height="22.600" fill="#f8f8f8" stroke="#f00" stroke-width="1.400"/><path d="M12 6v12M6 12h12" stroke="#2a2aff" stroke-width="2"/></symbol>
<symbol id="checker" viewBox="0 0 18 18"><path fill="var(--a)" d="M0 0h6v6H0zM12 0h6v6h-6zM6 6h6v6H6zM0 12h6v6H0z"/><path fill="var(--b)" d="M6 0h6v6H6zM0 6h6v6H0zM12 6h6v6h-6zM6 12h5v6H6z"/></symbol>
<symbol id="float" viewBox="0 0 11 11"><rect x=".5" y=".5" width="10" height="10" rx="2" fill="#eee" stroke="#555"/><path d="M4.500 5V2.500h4v4H6.500M2.500 4.500h4v4h-4z" fill="none" stroke="#555" stroke-width=".9"/></symbol>
<symbol id="shut" viewBox="0 0 11 11"><rect x=".5" y=".5" width="10" height="10" rx="2" fill="#eee" stroke="#555"/><path d="M3 3l5 5M8 3L3 8" stroke="#444" stroke-width="1.800"/></symbol>
<symbol id="look" viewBox="0 0 14 14"><circle cx="5.500" cy="5.500" r="4.300" fill="none" stroke="#888" stroke-width="1.200"/><path d="M9 9l4 4" stroke="#888" stroke-width="1.400"/></symbol>
<symbol id="clock" viewBox="0 0 24 24"><circle cx="12" cy="12" r="10.800" fill="#f2f4f4" stroke="#777" stroke-width="1.300"/><path d="M11.500 4v8.500l5 3" fill="none" stroke="#667" stroke-width="1.300"/></symbol>
<symbol id="crs" viewBox="0 0 24 22"><circle cx="12" cy="10.500" r="9.500" fill="#b9dcfa" stroke="#4a7eb8"/><path d="M12 10v10M5 10q1 7 5 9M19 10q-1 7-5 9M4 14q8 4 16 0" stroke="#4a7eb8" fill="none"/><path d="M.7 9q1-4 5.500-6.500L9 .7h6l3 1.800Q22.500 5 23.300 9z" fill="#ccc" stroke="#777"/><path d="M3 6h18M7 3h10M12 1v8M8.500 1L6.500 9M15.500 1l2 8" stroke="#777" stroke-width=".8"/></symbol>
<symbol id="crsg" viewBox="0 0 24 22"><path d="M4 10q2 11 8 11t8-11" fill="#ddd" stroke="#666" stroke-width="1.300"/><path d="M12 1v20M8 9q1 7 4 12M16 9q-1 7-4 12M5 14h14" stroke="#666" fill="none"/><path d="M.7 9.500q1-4 5.500-6.500L9 .7h6l3 2.300Q22.500 5 23.300 9.500z" fill="#aaa" stroke="#555"/><path d="M3 6h18M8.500 1L6.500 9M15.500 1l2 8" stroke="#555"/></symbol>
<filter id="grain" x="0" y="0" width="1" height="1"><feTurbulence type="fractalNoise" baseFrequency=".45 .12" numOctaves="3" seed="4"/><feColorMatrix values="0 0 0 0 .5  0 0 0 0 .5  0 0 0 0 .5  1 0 0 0 -.3"/></filter>
<filter id="patch" x="0" y="0" width="1" height="1"><feTurbulence type="fractalNoise" baseFrequency=".06 .09" numOctaves="5" seed="9"/><feColorMatrix values="0 0 0 0 .45  0 0 0 0 .45  0 0 0 0 .45  2 0 0 0 -.9"/></filter>
<filter id="soft"><feGaussianBlur stdDeviation="8"/></filter>
<pattern id="rows" width="5" height="8" patternUnits="userSpaceOnUse"><path d="M1 0v8" stroke="#3a3a3a" stroke-width="1"/></pattern>
<mask id="spots" maskUnits="userSpaceOnUse" x="450" y="240" width="1050" height="740"><g fill="#fff" filter="url(#soft)"><ellipse cx="860" cy="278" rx="50" ry="24"/><ellipse cx="1035" cy="276" rx="70" ry="24"/><ellipse cx="1290" cy="255" rx="25" ry="8"/><ellipse cx="1360" cy="258" rx="20" ry="8"/><ellipse cx="1420" cy="275" rx="55" ry="14"/><rect x="496" y="855" width="720" height="10"/><rect x="1232" y="845" width="160" height="28"/></g></mask>
</defs>
</svg>

<div class="app">
<header class="title">
  <svg class="q"><use href="#qgis"/></svg><span>*Drone Camp Testing - QGIS</span>
  <svg class="win" viewBox="0 0 160 20"><path d="M0 9.500h15" stroke="#888"/><path d="M69.500 4.500h11v11h-11zM72.500 4.500v-3h11v11h-3" fill="none" stroke="#888"/><path d="M140 2l15 15M155 2l-15 15" stroke="#888" stroke-width="1.100"/></svg>
</header>
<nav class="menu"><span>Pro<u>j</u>ect</span><span><u>E</u>dit</span><span><u>V</u>iew</span><span><u>L</u>ayer</span><span><u>S</u>ettings</span><span><u>P</u>lugins</span><span>Vect<u>o</u>r</span><span><u>R</u>aster</span><span><u>D</u>atabase</span><span><u>W</u>eb</span><span><u>M</u>esh</span><span>MMQGIS</span><span>Pro<u>c</u>essing</span><span><u>H</u>elp</span></nav>

<div class="bar">
<i class="grip"></i><svg><use href="#new"/></svg><svg><use href="#open"/></svg><svg><use href="#save"/></svg><svg><use href="#layout"/></svg><svg><use href="#wrenchpage"/></svg><svg><use href="#style"/></svg>
<i class="grip"></i><svg><use href="#hand"/></svg><svg><use href="#pan"/></svg><svg><use href="#zin"/></svg><svg><use href="#zout"/></svg><svg><use href="#zfull"/></svg><svg class="off"><use href="#zsel"/></svg><svg><use href="#zlay"/></svg><svg><use href="#znat"/></svg><svg><use href="#zlast"/></svg><svg class="off"><use href="#znext"/></svg><svg><use href="#mapview"/></svg><svg><use href="#bm"/></svg><svg><use href="#bms"/></svg><svg><use href="#refresh"/></svg>
<i class="grip"></i><svg class="on"><use href="#ident"/></svg><svg class="off"><use href="#action"/></svg><b class="dim"></b><svg class="off"><use href="#select"/></svg><b class="dim"></b><svg class="off"><use href="#expr"/></svg><b class="dim"></b><svg><use href="#desel"/></svg><svg class="off"><use href="#table"/></svg><svg class="off"><use href="#abacus"/></svg><svg class="on"><use href="#gear"/></svg><svg><use href="#sigma"/></svg><svg><use href="#ruler"/></svg><b></b><svg><use href="#tip"/></svg><svg><use href="#tnote"/></svg><b></b>
</div>
<div class="bar">
<i class="grip"></i><svg><use href="#dsm"/></svg><svg><use href="#gpkg"/></svg><svg><use href="#vecnew"/></svg><svg><use href="#feather"/></svg><svg><use href="#chip"/></svg><i class="sep"></i><svg><use href="#virt"/></svg>
<i class="grip"></i><svg class="off"><use href="#pens"/></svg><svg class="off"><use href="#pen"/></svg><svg class="off"><use href="#savee"/></svg><svg class="off"><use href="#blobn"/></svg><svg class="off"><use href="#vtool"/></svg><b class="dim"></b><svg class="off"><use href="#multi"/></svg><svg class="off"><use href="#trash"/></svg><svg class="off"><use href="#cut"/></svg><svg class="off"><use href="#copy"/></svg><svg class="off"><use href="#paste"/></svg><svg class="off"><use href="#undo"/></svg><svg class="off"><use href="#redo"/></svg>
<i class="grip"></i><svg class="off"><use href="#lab"/></svg><svg class="off"><use href="#diag"/></svg><i class="sep"></i><svg><use href="#labpin"/></svg><svg><use href="#labred"/></svg><i class="sep"></i><svg class="off"><use href="#labp"/></svg><svg class="off"><use href="#labe"/></svg><svg class="off"><use href="#laba"/></svg><svg class="off"><use href="#labr"/></svg><svg class="off"><use href="#labc"/></svg>
<i class="grip"></i><svg><use href="#db"/></svg><i class="grip"></i><svg><use href="#g1"/></svg><svg><use href="#g2"/></svg><svg><use href="#g3"/></svg><i class="grip"></i><svg><use href="#py"/></svg><svg><use href="#hammer"/></svg><svg><use href="#plug"/></svg><i class="grip"></i><svg><use href="#help"/></svg>
</div>
<div class="bar">
<i class="grip"></i><svg class="off"><use href="#tri"/></svg><svg class="off"><use href="#bloba"/></svg><b class="dim"></b><svg class="off"><use href="#blobr"/></svg><svg class="off"><use href="#simp"/></svg><svg class="off"><use href="#ring"/></svg><svg class="off"><use href="#part"/></svg><svg class="off"><use href="#ring"/></svg><svg class="off"><use href="#ringx"/></svg><svg class="off"><use href="#partx"/></svg><svg class="off"><use href="#reshape"/></svg><svg class="off"><use href="#offset"/></svg><svg class="off"><use href="#vrot"/></svg><svg class="off"><use href="#merge"/></svg><svg class="off"><use href="#split"/></svg><svg class="off"><use href="#split"/></svg><svg class="off"><use href="#mergef"/></svg><svg class="off"><use href="#ladder"/></svg><svg class="off"><use href="#rotsym"/></svg><b class="dim"></b>
<i class="grip"></i><svg><use href="#h1"/></svg><svg><use href="#h2"/></svg><svg><use href="#hist"/></svg><svg><use href="#h4"/></svg><svg><use href="#s1"/></svg><svg><use href="#s2"/></svg><svg><use href="#c1"/></svg><svg><use href="#c2"/></svg>
</div>
<div class="bar last">
<i class="grip"></i><svg class="off"><use href="#arc"/></svg><b class="dim"></b><svg class="off"><use href="#circ"/></svg><b class="dim"></b><svg class="off"><use href="#elli"/></svg><b class="dim"></b><svg class="off"><use href="#rect"/></svg><b class="dim"></b><svg class="off"><use href="#poly"/></svg><b class="dim"></b>
<i class="grip"></i><svg><use href="#plus"/></svg><b></b>
</div>

<main class="work">
  <section class="layers">
    <div class="ptitle"><span>Layers</span><svg><use href="#float"/></svg><svg><use href="#shut"/></svg></div>
    <div class="ptools">
      <svg viewBox="0 0 17 17"><path d="M1 9l6-3 5 5-5 5z" fill="#f2b34c"/><path d="M1 9l2 2 2-3zM4 14l3 2 2-4z" fill="#d8383f"/><path d="M3 11l3-3 2 3-3 3z" fill="#4e8fd0"/><path d="M8.500 8l6-5.500 2 1.500L11 10z" fill="#e09c4a"/></svg>
      <svg viewBox="0 0 17 17"><path d="M1 6v10h9M4 4v9h8M7 2v8h7V2z" fill="none" stroke="#555"/><path d="M9 9V2.500q1.500-2 3 0V9" fill="none" stroke="#3d6c9e"/><rect x="11" y="11" width="6" height="6" fill="#4b9258"/><path d="M14 12v4M12 14h4" stroke="#fff"/></svg>
      <svg viewBox="0 0 17 17"><path d="M0 9q8-9 16 0-8 7-16 0z" fill="#ddd" stroke="#777"/><circle cx="8" cy="8.500" r="3.500" fill="#4b7297"/><circle cx="8" cy="8.500" r="1.500"/><path d="M8 9h9l-4.500 5z" fill="#444"/></svg>
      <svg viewBox="0 0 17 17"><path d="M2 2h13v3l-5 5v6l-3-1v-5L2 5z" fill="#6a97cc" stroke="#3b679a"/><path d="M2 1.500h13v2.500H2z" fill="#f5d94a" stroke="#c2a100" stroke-width=".6"/></svg>
      <svg class="off" viewBox="0 0 17 17"><path d="M7 2.500q-5-2-5.500 1 0 2.500 3.500 3-4 .5-4 3 .5 3.500 6 1.500" fill="none" stroke="#333" stroke-width="1.700"/><path d="M9 16v-5q3-3 6 0v5" fill="none" stroke="#555" stroke-width="2"/></svg>
      <b class="dim"></b>
      <svg viewBox="0 0 17 17"><path d="M1 2v13M1 2.500h15" stroke="#888"/><path d="M3 5h4v3H3zM3 10h4v3H3z" fill="#fff" stroke="#e69a25"/><path d="M10 3h3v8h3.500L11.500 16 7 11h3z" fill="#5f90cc" stroke="#2f5a8a" stroke-width=".8"/></svg>
      <svg viewBox="0 0 17 17"><path d="M1 2v13M1 2.500h15" stroke="#888"/><path d="M3 5h4v3H3zM3 10h4v3H3z" fill="#fff" stroke="#e69a25"/><path d="M10 15h3V7h3.500L11.500 1 7 7h3z" fill="#5f90cc" stroke="#2f5a8a" stroke-width=".8"/></svg>
      <svg viewBox="0 0 17 17"><rect x="2" y="2" width="12" height="12" fill="#f3f3f3" stroke="#777"/><rect x="10" y="11" width="7" height="6" rx="1" fill="#e84a50"/><path d="M11.500 14h4" stroke="#fff" stroke-width="1.300"/></svg>
    </div>
    <div class="tree">
      <div class="row sel"><b></b><i class="chk"></i><svg class="ck blue"><use href="#checker"/></svg><strong><u>Davis_4l10l18_index_grvi</u></strong><em></em></div>
      <div class="row leaf"><i class="sw k"></i><span>0.812588</span></div>
      <div class="row leaf"><i class="sw none"></i><span>16.3873</span></div>
      <div class="row"><b class="hid"></b><i class="chk"></i><i class="sw shape"></i><strong class="sf">low_throughput_shapefile</strong><em></em></div>
      <div class="row"><b></b><i class="chk"></i><svg class="ck navy"><use href="#checker"/></svg><strong>Solano_4l7l20_index_ndre</strong><em></em></div>
      <div class="row leaf"><i class="sw c3"></i><span>0.3</span></div>
      <div class="row leaf"><i class="sw c4"></i><span>0.4</span></div>
      <div class="row leaf"><i class="sw c5"></i><span>0.5</span></div>
      <div class="row leaf"><i class="sw c6"></i><span>0.6</span></div>
      <div class="row leaf"><i class="sw c7"></i><span>0.7</span></div>
    </div>
  </section>
  <div class="vsplit"></div>
  <section class="canvas">
    <svg viewBox="384 237 1165 746">
      <clipPath id="field"><path d="M462 334V310L576 292 692 262 1000 257 1160 254 1355 255 1438 257 1437 275 1450 272 1465 270 1472 270 1478 280 1478 700 1468 848V866L1428 940 1396 966H1122L1091 959V966H820V959H812V966H628L567 963 514 951 487 945 464 933V800L463 848 461 770H463V700L462 690 462 436H457L458 400 460 350z"/></clipPath>
      <g clip-path="url(#field)">
        <rect x="450" y="250" width="1040" height="720" fill="#060606"/>
        <rect x="463" y="848" width="960" height="120" fill="#0e0e0e"/>
        <g filter="url(#soft)"><ellipse cx="855" cy="280" rx="36" ry="18" fill="#2a2a2a"/><ellipse cx="1020" cy="280" rx="45" ry="18" fill="#2c2c2c"/><ellipse cx="1420" cy="270" rx="35" ry="9" fill="#161616"/><rect x="1235" y="840" width="155" height="30" fill="#383838"/></g>
        <g mask="url(#spots)" opacity=".62"><rect x="450" y="245" width="1040" height="50" filter="url(#patch)"/><rect x="480" y="840" width="930" height="50" filter="url(#patch)"/></g>
        <path d="M492 893L960 902V966H492z" fill="#151515"/>
        <path d="M956 900L1396 904V966H956z" fill="#191919"/>
        <rect x="490" y="893" width="420" height="75" filter="url(#grain)" opacity=".24"/>
        <rect x="956" y="893" width="440" height="75" filter="url(#grain)" opacity=".3"/>
        <path d="M956 902H1396V966H956z" fill="url(#rows)" opacity=".55"/>
        <path d="M492 896H912V966H492z" fill="url(#rows)" opacity=".25"/>
        <path d="M491 895v55M1397 905v60" stroke="#444" stroke-width="3"/>
        <path d="M1396 904q8-30 8-60M1412 848v90M1421 848l-4 60" stroke="#333" fill="none" stroke-width="2"/>
        <path d="M490 869q300 6 700 6M930 889q150 4 300 4" stroke="#262626" fill="none"/>
        <path d="M1232 876h14v5h-14zM1310 874h8v6h-8z" fill="#000"/>
      </g>
    </svg>
  </section>
  <div class="vsplit r"></div>
  <section class="right">
    <div class="ptitle"><span>Processing Toolbox</span><svg><use href="#float"/></svg><svg><use href="#shut"/></svg></div>
    <div class="ptools rt">
      <svg viewBox="0 0 17 17"><circle cx="6" cy="6" r="4" fill="none" stroke="#d22b33" stroke-width="3.500" stroke-dasharray="1.800 1"/><circle cx="6" cy="6" r="2.500" fill="none" stroke="#d22b33" stroke-width="2"/><circle cx="8" cy="14" r="2.500" fill="#8ab0df"/><path d="M8 9h9l-4.500 5z" fill="#444"/></svg>
      <svg viewBox="0 0 17 17"><ellipse cx="8" cy="7" rx="7" ry="4.500" fill="none" stroke="#999" stroke-width="2.400"/><text x="5" y="14" font-family="Liberation Sans, sans-serif" font-weight="bold" font-size="12" fill="#2467b5">R</text><path d="M9 9h8l-4 5z" fill="#333"/></svg>
      <svg viewBox="0 0 24 24"><use href="#py"/><path d="M11 12h13l-6.500 7z" fill="#333"/></svg>
      <svg><use href="#clock"/></svg>
      <svg class="on sm" viewBox="0 0 17 17"><path d="M3 1h8l3.500 3.500V16H3z" fill="#f3f3f3" stroke="#777"/><path d="M5 6h7M5 8.500h7M5 11h7M5 13.500h5" stroke="#777"/></svg>
      <i class="sep"></i>
      <svg class="off" viewBox="0 0 17 17"><path d="M1 2h12v10H8l-3 3v-3H1z" fill="#c9c27e"/><path d="M9 16l6-9 1.500 1-5 8z" fill="#888"/></svg>
      <i class="sep"></i>
      <svg viewBox="0 0 17 17"><path d="M7 7l2-1.500 7 8-2.500 2.500z" fill="#e5c651" stroke="#8c7330" stroke-width=".7"/><path d="M1 3q0 5 5 5l3-3q-1-4-5-4l2 3-2 1z" fill="#eee" stroke="#777"/></svg>
    </div>
    <div class="search"><svg><use href="#look"/></svg><span>zonal</span><svg class="clr" viewBox="0 0 13 10"><path d="M0 5l4-5h9v10H4z" fill="#888"/><path d="M5.500 2.500l5 5M10.500 2.500l-5 5" stroke="#fff" stroke-width="1.200"/></svg></div>
    <div class="algs">
      <div class="list">
        <div class="alg"><b class="rt"></b><svg><use href="#clock"/></svg><span>Recently used</span></div>
        <div class="alg"><b></b><svg><use href="#qgis"/></svg><span>Raster analysis</span></div>
        <div class="alg sub"><svg><use href="#gear"/></svg><span>Raster layer zonal statistics</span></div>
        <div class="alg sub"><svg><use href="#gear"/></svg><span>Zonal histogram</span></div>
        <div class="alg sub sel"><svg viewBox="0 0 22 22"><path d="M1 0h12v12H1z" fill="#275d8c"/><path d="M5 0h4v4H5zM1 4h4v4H1zM9 4h4v4H9z" fill="#5a93c4"/><path d="M12 10h9v3h-1l-1-1.500h-4l3 4-3 4.500h5l1-2h1l-1 4h-9v-1l4.500-5.500L12 11z" fill="#9a3fb0"/></svg><span>Zonal statistics</span></div>
        <div class="alg"><b></b><svg viewBox="0 0 22 22"><path d="M3 21h17" stroke="#666" stroke-width="2"/><path d="M11 1l9 9-9 9-9-9z" fill="#fff" stroke="#555"/><path d="M2 11l9 9 9-9" fill="none" stroke="#111" stroke-width="1.600"/><path d="M11 16V6M11 15L6 7M11 15l5-8M11 15l-2-9M11 15l3-10" stroke="#2ba13a" stroke-width="1.200"/></svg><span>GRASS</span></div>
        <div class="alg lastrow"><b></b><span>Raster (r.*)</span></div>
      </div>
      <div class="sb"><i class="up"></i><i class="thumb"></i><i class="down"></i></div>
    </div>
    <div class="hsplit"></div>
    <div class="ptitle res"><span>Results Viewer</span><svg><use href="#float"/></svg><svg><use href="#shut"/></svg></div>
    <div class="box"></div>
    <div class="hsplit s"></div>
    <div class="box two"></div>
  </section>
</main>

<footer class="status">
  <div class="field loc"><svg><use href="#look"/></svg>Type to locate (Ctrl+K)</div>
  <span class="lc">Coordinate</span><div class="field co">606262.9,4266044.5</div>
  <svg class="mouse" viewBox="0 0 24 24"><path d="M3 4l5-3 5 5M2 9l4 3M18 3l3-2" stroke="#111" stroke-width="1.700" fill="none"/><rect x="7" y="6" width="12" height="17" rx="6" transform="rotate(-25 13 14)" fill="#fff" stroke="#111" stroke-width="2.200"/><path d="M9 10l8-3M8 14l9-4M12 7l3 8" stroke="#111" stroke-width="2"/><circle cx="14.500" cy="18" r="2" fill="#111"/></svg>
  <span>Scale</span><div class="field sc">1:1609<i><b></b></i></div>
  <svg class="lock" viewBox="0 0 18 22"><path d="M4.500 11V6.500Q4.500 1.500 9 1.500t4.500 5V11" fill="none" stroke="#aaa" stroke-width="2.200"/><rect x="1" y="10" width="16" height="12" rx="2" fill="#666"/></svg>
  <span>Magnifier</span><div class="field sp m">100%<i><b class="u"></b><b></b></i></div>
  <span class="rot">Rotation</span><div class="field sp ro">0.0 °<i><b class="u"></b><b></b></i></div>
  <i class="chk"></i><span class="ren">Render</span>
  <svg class="gl"><use href="#crsg"/></svg><span class="ep">EPSG:32610</span>
  <svg class="bub" viewBox="0 0 24 22"><path d="M12 0C5 0 0 4 0 9.500S5 19 12 19q2 0 4-.5 2 3 6 3.500-2-3-1.500-5.500Q24 14 24 9.500C24 4 19 0 12 0z" fill="#666"/><g fill="#fff"><circle cx="6.500" cy="9.500" r="1.700"/><circle cx="12" cy="9.500" r="1.700"/><circle cx="17.500" cy="9.500" r="1.700"/></g></svg>
</footer>

<div class="taskbar">
  <svg class="start" viewBox="0 0 24 24"><path d="M0 3.400l9.800-1.400v9.500H0zM10.800 1.900L24 0v11.500H10.800zM0 12.500h9.800V22L0 20.600zM10.800 12.500H24V24l-13.200-1.900z" fill="#fff"/></svg>
  <div class="find"><svg viewBox="0 0 26 26"><circle cx="16" cy="9" r="7.800" fill="none" stroke="#111" stroke-width="1.700"/><path d="M10.500 14.500L1 24.500" stroke="#111" stroke-width="1.700"/></svg>Type here to search</div>
  <div class="tb w1"><svg viewBox="0 0 26 26"><circle cx="13" cy="13" r="10.500" fill="none" stroke="#fff" stroke-width="2.800"/></svg></div>
  <div class="tb w1"><svg viewBox="0 0 26 26"><path d="M1.500 1v4h15V1M1.500 25v-4h15v4M1.500 8.500h15v9h-15zM23.500 1v5M23.500 12v13" fill="none" stroke="#fff" stroke-width="1.300"/><rect x="22" y="8" width="3" height="3" fill="#fff"/></svg></div>
  <div class="tb run multi"><svg viewBox="0 0 34 34"><circle cx="17" cy="17" r="16.500" fill="#fdd04a"/><path d="M17 17L2.700 8.800A16.500 16.500 0 0 0 16 33.500l8-13z" fill="#1ea362"/><path d="M17 9.500h14.700A16.500 16.500 0 0 0 2.700 8.800L10 21z" fill="#d9503f"/><circle cx="17" cy="17" r="7.600" fill="#fff"/><circle cx="17" cy="17" r="6" fill="#4688f1"/></svg></div>
  <div class="tb run"><svg viewBox="0 0 34 34"><circle cx="17" cy="17" r="16.500" fill="url(#gr)"/><text x="10.500" y="23" font-family="Liberation Serif, serif" font-size="20" fill="#fff">R</text></svg></div>
  <div class="tb run multi"><svg viewBox="0 0 34 34"><path d="M1 4h12l2 3h18v24H1z" fill="#fdd263"/><path d="M1 4h12l2 2v3H1z" fill="#e5a100"/><path d="M6 33V20q0-2 2-2h18q2 0 2 2v13h-7v-7h-8v7z" fill="#3a98dd"/></svg></div>
  <div class="tb run"><svg viewBox="0 0 34 34"><circle cx="17" cy="17" r="16.700" fill="#fff"/><path d="M12.500 6.500c5-2 9 0 12 2 2.500 5 2.500 12 .5 18-1 3.500-7 4-8 1s2-4.500 4-3.500l.5-3c-2 0-3.500-1.500-3.500-3-2 4-8 3-10 0s-1.500-7 0-7 5 0 5-1-.5-3-.5-3.500zM11.500 7L7 11h4z" fill="#0aa914"/><circle cx="22.500" cy="15" r="1" fill="#fff"/></svg></div>
  <div class="tb run act"><svg viewBox="0 0 24 24"><use href="#qgis"/></svg></div>
  <div class="tb run"><svg viewBox="0 0 34 34"><rect width="34" height="34" rx="2" fill="#3f3f3f"/><path d="M8.500 11.500l17-5.500v6.500l-9 3 9 3V24l-17 5.500V23l9-3-9-3z" fill="#ff9a0a"/></svg></div>
  <div class="tb run"><svg viewBox="0 0 34 34"><path d="M17 0l8 8-8 8-8-8z" fill="#ff7d83"/><path d="M8.500 9l8 8-8 8L0 17z" fill="#80b2ff"/><path d="M25.500 9l8.500 8-8.500 8-8-8z" fill="#8bd35f"/><path d="M17 18l8 8-8 8-8-8z" fill="#ffe480"/><path d="M14 8l3 4v14M17 13l8 4" stroke="#444" stroke-width="2" fill="none"/><circle cx="17" cy="26" r="2.500" fill="#444"/><circle cx="25" cy="17" r="2.500" fill="#444"/><circle cx="17" cy="12" r="2.500" fill="#444"/></svg></div>
  <div class="tb run"><svg viewBox="0 0 34 34"><ellipse cx="13" cy="16" rx="12" ry="9" transform="rotate(-15 13 16)" fill="#a2a2a2"/><ellipse cx="17" cy="9.500" rx="13" ry="8.500" transform="rotate(-12 17 9.500)" fill="#fff" stroke="#e03a3a" stroke-width="1.800"/><path d="M12 5l9 15M20 3l-3 17" stroke="#999" stroke-width="1.500"/><ellipse cx="18" cy="28" rx="3.200" ry="5" transform="rotate(8 18 28)" fill="none" stroke="#1787cc" stroke-width="2.300"/><ellipse cx="27" cy="23" rx="5" ry="3.200" transform="rotate(25 27 23)" fill="none" stroke="#1787cc" stroke-width="2.300"/></svg></div>
  <svg class="tray" viewBox="1528 0 204 60"><g fill="none" stroke="#fff" stroke-width="1.300"><path d="M1529.500 34l8.500-8.500 8.500 8.500"/><path d="M1571 24.500h13v11h-13z" fill="#fff"/><path d="M1563 24v5q0 3 2.500 3t2.500-3v-5zM1564 24v-3M1567 24v-3M1565.500 32v4h4M1586 27v6"/><path d="M1602.500 40q1-17 17-17.500M1606.500 40q1-12 13-13M1610.500 40q1-8 9-8.500M1614 40q1-4 5.500-4.500" opacity=".8"/><path d="M1635.500 27h3l5-5v17l-5-5h-3zM1647.500 26.500l7 7M1654.500 26.500l-7 7"/></g><circle cx="1618" cy="38.500" r="2" fill="#fff"/><path d="M1676 19.500l6 4-6 4-6-4zM1688 19.500l6 4-6 4-6-4zM1676 27.500l6 4-6 4-6-4zM1688 27.500l6 4-6 4-6-4zM1682 33l6 4-6 3.500-6-3.500z" fill="#fff"/><path d="M1711 38q-5 0-5-5t5-5.500q1-5.500 7-5.500t8 5q4 1 4 5.500t-5 5.500z" fill="#fff"/><path d="M1716.500 36v-4h-3l4.500-5 4.500 5h-3v4z" fill="#484848"/></svg>
  <div class="time"><span>8:25 PM</span><span>6/1/2020</span></div>
  <svg class="ac" viewBox="0 0 26 26"><path d="M1.500 1.500h23v18h-8l-4 4-4-4h-7z" fill="none" stroke="#fff" stroke-width="1.300"/></svg>
  <i class="desk"></i>
</div>
</div>

<div class="dialog">
  <div class="dtitle"><svg class="q"><use href="#qgis"/></svg><span>Warp (Reproject)</span><svg class="x" viewBox="0 0 16 16"><path d="M.5.5l15 15M15.500.5l-15 15" stroke="#111" stroke-width="1.200"/></svg></div>
  <div class="dbody">
    <div class="tabs"><div class="tab cur">Parameters</div><div class="tab">Log</div></div>
    <div class="pane">
      <div class="form">
        <label class="first">Input layer</label>
        <div class="line"><div class="combo h32 il"><svg class="ck navy"><use href="#checker"/></svg><span class="wide">Davis_4l10l18_index_grvi [EPSG:32610]</span><b></b></div><div class="mini dots">...</div></div>
        <label class="opt">Source CRS [optional]</label>
        <div class="line"><div class="combo h31"><b></b></div><div class="mini"><svg viewBox="0 0 24 24"><use href="#crs" width="24" height="22"/><use href="#bPen" x="13" y="12.500" width="11" height="10"/></svg></div></div>
        <label class="opt">Target CRS [optional]</label>
        <div class="line"><div class="combo h31"><span class="wide">EPSG:4326 - WGS 84</span><b></b></div><div class="mini"><svg viewBox="0 0 24 24"><use href="#crs" width="24" height="22"/><use href="#bPen" x="13" y="12.500" width="11" height="10"/></svg></div></div>
        <label>Resampling method to use</label>
        <div class="combo h27"><span>Nearest Neighbour</span><b></b></div>
        <label>Nodata value for output bands [optional]</label>
        <div class="combo spin"><span>Not set</span><i><b class="u"></b><b class="dim"></b></i></div>
      </div>
      <div class="sb d"><i class="up"></i><i class="thumb"></i><i class="down"></i></div>
    </div>
    <div class="prow"><div class="prog">0%</div><div class="btn offb">Cancel</div></div>
    <div class="brow"><div class="btn batch">Run as Batch Process...</div><div class="btn run">Run</div><div class="btn">Close</div><div class="btn">Help</div></div>
  </div>
</div>
</body>
</html>
```
FILE: styles.css
```
* { box-sizing: border-box; }
body { margin: 0; width: 1920px; height: 1080px; overflow: hidden; background: #efefef; font: 17px/27px "Open Sans", "Noto Sans", sans-serif; letter-spacing: -.15px; color: #000; }
i, em { font-style: normal; display: block; flex: none; }
svg { flex: none; display: block; }
.defs { position: absolute; width: 0; height: 0; }
.app { display: flex; flex-direction: column; height: 1080px; }

.title { height: 34px; background: #fff; display: flex; align-items: center; color: #888; flex: none; }
.q { width: 24px; height: 24px; }
.title .q { margin: 0 6px 0 2px; width: 23px; height: 23px; }
.title span { flex: 1; letter-spacing: .05px; }
.title .win { width: 160px; height: 20px; margin-right: 17px; position: relative; left: -7px; }
.menu { height: 30px; border-bottom: 1px solid #d3d3d3; display: grid; grid-template-columns: 70px 48px 54px 58px 81px 74px 67px 66px 90px 54px 60px 91px 101px 60px; padding-left: 13px; line-height: 32px; letter-spacing: 0; color: #999; flex: none; }
.menu u { text-underline-offset: 3px; text-decoration-thickness: 1px; }

.bar { height: 43px; border-bottom: 1px solid #b5b5b5; background: linear-gradient(#fafafa, #eee); display: flex; align-items: center; flex: none; }
.bar.last { height: 42px; }
.bar svg { width: 24px; height: 24px; margin: 0 4px 0 5px; }
.bar svg.on { width: 32px; height: 31px; padding: 3px; margin: 0 0 0 1px; }
.on { background: #dcdcdc; border: 1px solid #a8a8a8; border-radius: 3px; }
.off { opacity: .34; filter: grayscale(.6); }
.grip { width: 24px; height: 20px; background: radial-gradient(circle, #aaa 0 .8px, transparent 1px) 0 0 / 4px 3.300px; background-clip: content-box; padding: 0 6px 0 14px; }
.grip:first-child { width: 18px; padding-left: 8px; }
.sep { height: 24px; border-left: 1px solid #ccc; background: none; margin-left: 4px; width: 6px; }
b { flex: none; width: 18px; height: 6px; background: #505050; clip-path: polygon(4px 0, 14px 0, 9px 100%); }
.bar b { clip-path: polygon(3px 0, 15px 0, 9px 100%); }
b.dim { background: #a0a0a0; }
b.u { transform: scaleY(-1); }

.work { flex: 1; display: flex; min-height: 0; }
.layers { width: 374px; display: flex; flex-direction: column; }
.ptitle { height: 26px; display: flex; align-items: center; padding: 0 2px 0 4px; flex: none; }
.ptitle span { flex: 1; letter-spacing: 0; }
.ptitle svg { width: 11px; height: 11px; margin-left: 4px; margin-bottom: 2px; }
.ptools { height: 31px; display: flex; align-items: center; padding: 0 0 5px 6px; flex: none; }
.ptools svg { width: 17px; height: 17px; margin: 0 4px; }
.ptools b { margin: 0 -1px; }
.tree { flex: 1; background: #fff; border: 1px solid #b4b4b4; }
.row { height: 27px; display: flex; align-items: center; padding-left: 6px; }
.row > b { margin-right: 9px; clip-path: polygon(3px 0, 15px 0, 9px 100%); }
.sel { background: #efefef; }
.hid { visibility: hidden; }
.leaf { padding-left: 63px; }
.row span, .row strong { flex: 1; padding-top: 2px; margin-left: 6px; }
.row strong { letter-spacing: .08px; margin-left: 7px; }
.row .sf { margin-left: 6px; letter-spacing: 0; }
.row u { text-underline-offset: 4px; text-decoration-thickness: 1px; }
.row em { width: 6px; height: 23px; background: #e1e1e1; margin-right: 1px; }
.chk { width: 21px; height: 21px; border: 1px solid #b4b4b4; background: #fff; position: relative; }
.chk::after { content: ""; position: absolute; left: 3px; top: 2px; width: 13px; height: 15px; background: #000; clip-path: polygon(0 52%, 18% 42%, 38% 72%, 85% 0, 100% 6%, 46% 100%, 30% 100%); }
.ck { width: 20px; height: 20px; margin-left: 9px; }
.blue { --a: #1d4f80; --b: #6ea6dc; }
.navy { --a: #2b3c52; --b: #adc6e4; }
.sw { width: 20px; height: 20px; margin-bottom: 2px; }
.shape { width: 22px; height: 22px; margin: 0 0 2px 6px; background: #7e8b8f; border: 1px solid #333; }
.k { background: #000; }
.c3 { background: #d7191c; } .c4 { background: #fdae61; } .c5 { background: #ffffc0; } .c6 { background: #a6d96a; } .c7 { background: #1a9641; }
.vsplit { width: 9px; background: radial-gradient(circle, #aaa 0 .7px, transparent 1px) 0 0 / 3px 3px repeat-y content-box; padding: 367px 2px 365px 4px; }
.canvas { width: 1167px; margin-top: 1px; background: #fff; border: 1px solid #b4b4b4; }
.canvas svg { width: 1165px; height: 746px; }
.right { width: 361px; display: flex; flex-direction: column; }
.right .ptitle { padding-right: 2px; padding-left: 4px; }
.rt.ptools { padding-left: 7px; padding-right: 0; }
.rt svg { margin: 0 4px; }
.rt svg:nth-of-type(4) { margin-right: 2px; }
.rt svg.sm { width: 24px; height: 22px; padding: 2px; margin: 0 1px; }
.rt .sep { height: 10px; width: 6px; margin-left: 3px; }
.search { height: 27px; background: #fff; border: 1px solid #aaa; border-radius: 2px; display: flex; align-items: center; padding: 0 8px; }
.search svg { width: 13px; height: 13px; }
.search span { flex: 1; margin-left: 7px; font-size: 16px; letter-spacing: -.3px; }
.search .clr { height: 10px; }
.algs { height: 188px; border: 1px solid #aaa; background: #fff; display: flex; overflow: hidden; }
.list { flex: 1; }
.alg { height: 27px; display: flex; align-items: center; padding-left: 6px; }
.alg svg { width: 22px; height: 22px; margin: 0 7px 0 10px; }
.alg b { clip-path: polygon(3px 0, 15px 0, 9px 100%); }
.alg b.rt { height: 12px; clip-path: polygon(6px 0, 12px 50%, 6px 100%); }
.alg span { padding-top: 1px; }
.alg.sub { padding-left: 54px; }
.alg.lastrow { padding-left: 36px; height: 25px; }
.alg.lastrow span { margin-left: 9px; }
.sb { width: 21px; border-left: 1px solid #aaa; background: #e4e4e4; display: flex; flex-direction: column; justify-content: flex-start; }
.sb i { background: #fafafa; border-bottom: 1px solid #b4b4b4; }
.up, .down { height: 21px; display: flex; align-items: center; justify-content: center; }
.up::after, .down::after { content: ""; width: 12px; height: 6px; background: #505050; clip-path: polygon(0 100%, 50% 0, 100% 100%); }
.down::after { transform: scaleY(-1); }
.sb .thumb { height: 85px; background: linear-gradient(90deg, #fff, #f1f1f1); }
.sb .down { margin-top: auto; border: 0; border-top: 1px solid #b4b4b4; }
.hsplit { height: 9px; background: radial-gradient(circle, #aaa 0 .7px, transparent 1px) 0 50% / 3px 3px repeat-x content-box; padding: 3px 172px; }
.hsplit.s { height: 5px; padding: 1px 172px; }
.ptitle.res { height: 21px; }
.ptitle.res span { padding-top: 1px; }
.ptitle.res svg { margin-bottom: 1px; }
.box { height: 221px; background: #fff; border: 1px solid #b4b4b4; }
.box.two { flex: 1; height: auto; }

.status { height: 36px; display: flex; align-items: center; flex: none; letter-spacing: -.55px; font-size: 16px; padding-top: 1px; }
.field { height: 27px; background: #fff; border: 1px solid #aaa; border-radius: 2px; padding-left: 3px; line-height: 26px; display: flex; }
.loc { width: 293px; margin-left: 4px; color: #777; align-items: center; letter-spacing: 0; }
.loc svg { width: 12px; height: 12px; margin: 0 8px 0 4px; }
.status span { white-space: nowrap; width: 36px; }
.status .lc { margin-left: 518px; width: 77px; }
.co { width: 166px; margin-left: 3px; padding-left: 6px; letter-spacing: -.35px; }
.mouse { width: 24px; height: 24px; margin: 0 14px 0 3px; }
.sc { width: 113px; margin-left: 3px; }
.sc i { margin-left: auto; width: 30px; background: linear-gradient(#fff, #eee); display: flex; align-items: center; justify-content: center; }
.lock { width: 18px; height: 23px; margin: 0 10px 0 14px; }
.lock + span { width: 65px; }
.m { width: 105px; margin-left: 3px; }
.sp i { margin-left: auto; width: 22px; border-left: 1px solid #aaa; display: flex; flex-direction: column; align-items: center; justify-content: center; gap: 5px; background: #f8f8f8; }
.sp b { clip-path: polygon(3px 0, 15px 0, 9px 100%); }
.status .rot { margin-left: 8px; width: 58px; }
.ro { width: 101px; margin-left: 10px; }
.status .chk { margin: 0 8px 0 6px; }
.status .ren { width: 50px; letter-spacing: -.4px; }
.gl { width: 24px; height: 22px; margin: 0 4px 0 17px; }
.status .ep { width: 89px; letter-spacing: 0; }
.bub { width: 24px; height: 22px; margin-left: 24px; }

.taskbar { height: 60px; background: linear-gradient(90deg, #464646 1840px, #3f454a); display: flex; color: #fff; flex: none; }
.start { width: 24px; height: 24px; margin: 18px 24px; }
.find { width: 516px; background: #f2f2f2; border: 2px solid #c0c0c0; color: #222; font-size: 21.500px; letter-spacing: -.35px; display: flex; align-items: center; padding: 1px 0 0 15px; }
.find svg { width: 26px; height: 26px; margin-right: 17px; }
.tb { display: flex; align-items: center; justify-content: center; width: 75px; height: 60px; border-bottom: 3px solid transparent; padding-top: 2px; }
.tb.w1 { width: 72px; }
.tb svg { width: 34px; height: 34px; }
.w1 svg { width: 25px; height: 25px; }
.w1 + .run { margin-left: 3px; }
.run.tb { border-image: linear-gradient(90deg, transparent 7px, #76b9ed 7px 68px, transparent 68px) 3; }
.multi.tb { border-image: linear-gradient(90deg, transparent 7px, #76b9ed 7px 55px, #5b8fb8 55px 68px, transparent 68px) 3; }
.act.tb { background: #7a7a7a; border-image: none; border-bottom: 3px solid #8cc8f8; }
.tray { width: 204px; height: 60px; margin-left: 193px; }
.time { width: 112px; text-align: center; display: flex; flex-direction: column; line-height: 28px; padding-top: 2px; }
.ac { width: 26px; height: 26px; margin: 17px 30px 0 13px; }
.desk { width: 1px; background: #999; margin-left: auto; margin-right: 6px; }

.dialog { position: absolute; left: 465px; top: 292px; width: 1039px; height: 557px; background: #efefef; border: 1px solid #555; box-shadow: 0 4px 18px rgba(0,0,0,.35); font-size: 16px; letter-spacing: -.5px; }
.dtitle { height: 44px; background: #fff; display: flex; align-items: center; padding: 0 17px 0 11px; }
.dtitle span { flex: 1; margin-left: 5px; padding-top: 1px; letter-spacing: .3px; }
.dtitle .x { width: 16px; height: 16px; }
.dbody { padding: 16px 16px 0; }
.tabs { height: 34px; display: flex; align-items: flex-end; }
.tab { height: 32px; width: 61px; background: #ebebeb; border: 1px solid #b0b0b0; border-left: 0; border-bottom: 0; border-radius: 2px 2px 0 0; text-align: center; line-height: 34px; }
.tab.cur { width: 116px; height: 35px; background: #fff; border-left: 1px solid #b0b0b0; line-height: 36px; margin-bottom: -1px; z-index: 1; position: relative; letter-spacing: -.6px; }
.pane { height: 338px; border: 1px solid #aaa; display: flex; overflow: hidden; box-shadow: inset 1px 1px #fff; }
.form { flex: 1; padding: 4px 4px 0 5px; display: flex; flex-direction: column; }
.form label { line-height: 22px; height: 22px; margin: 8px 0 7px; flex: none; letter-spacing: -.45px; text-indent: -.5px; }
.form .first { margin-top: 0; letter-spacing: -.3px; }
.form .opt { letter-spacing: -.23px; }
.line { display: flex; gap: 6px; align-items: flex-start; }
.combo { flex: 1; border: 1px solid #aaa; border-radius: 3px; background: linear-gradient(#fff, #ededed); display: flex; align-items: center; padding: 0 7px 0 3px; }
.form > .combo { flex: none; }
.combo > b { margin-left: auto; }
.combo b, .sc b { clip-path: polygon(3px 0, 15px 0, 9px 100%); }
.h32 { height: 32px; } .h31 { height: 31px; } .h27 { height: 27px; }
.combo.il { padding-left: 8px; }
.il .ck { margin: 0 3px 0 0; }
.combo span { padding-top: 1px; letter-spacing: -.6px; }
.combo .wide { letter-spacing: .08px; }
.il .wide { padding-top: 2px; }
.mini { width: 32px; height: 31px; border: 1px solid #aaa; border-radius: 3px; background: linear-gradient(#fff, #eee); display: flex; align-items: center; justify-content: center; }
.mini svg { width: 24px; height: 24px; }
.dots { width: 31px; height: 26px; line-height: 24px; letter-spacing: 0; }
.spin { height: 28px; background: #fff; padding-right: 0; margin-top: 1px; }
.combo.spin { background: #fff; padding-right: 0; }
.spin i { margin-left: auto; width: 21px; height: 26px; border-left: 1px solid #aaa; background: #f6f6f6; display: flex; flex-direction: column; align-items: center; justify-content: center; gap: 5px; }
.sb.d { width: 22px; padding-right: 1px; }
.d .thumb { height: 82px; }
.prow { display: flex; gap: 9px; margin-top: 38px; height: 29px; align-items: center; }
.prog { flex: 1; height: 27px; background: #fff; border: 1px solid #aaa; border-radius: 2px; text-align: center; line-height: 26px; }
.brow { display: flex; gap: 9px; margin-top: 10px; }
.btn { width: 80px; height: 30px; border: 1px solid #aaa; border-radius: 3px; background: linear-gradient(#fff, #efefef); text-align: center; line-height: 30px; letter-spacing: -.2px; }
.batch { width: 173px; margin-right: auto; letter-spacing: -.42px; text-indent: -1px; }
.btn.run { border-color: #3fa2f2; background: linear-gradient(#fdfdfd, #e0e6ec); }
.offb { color: #808080; border-color: #c4c4c4; height: 29px; }
```
